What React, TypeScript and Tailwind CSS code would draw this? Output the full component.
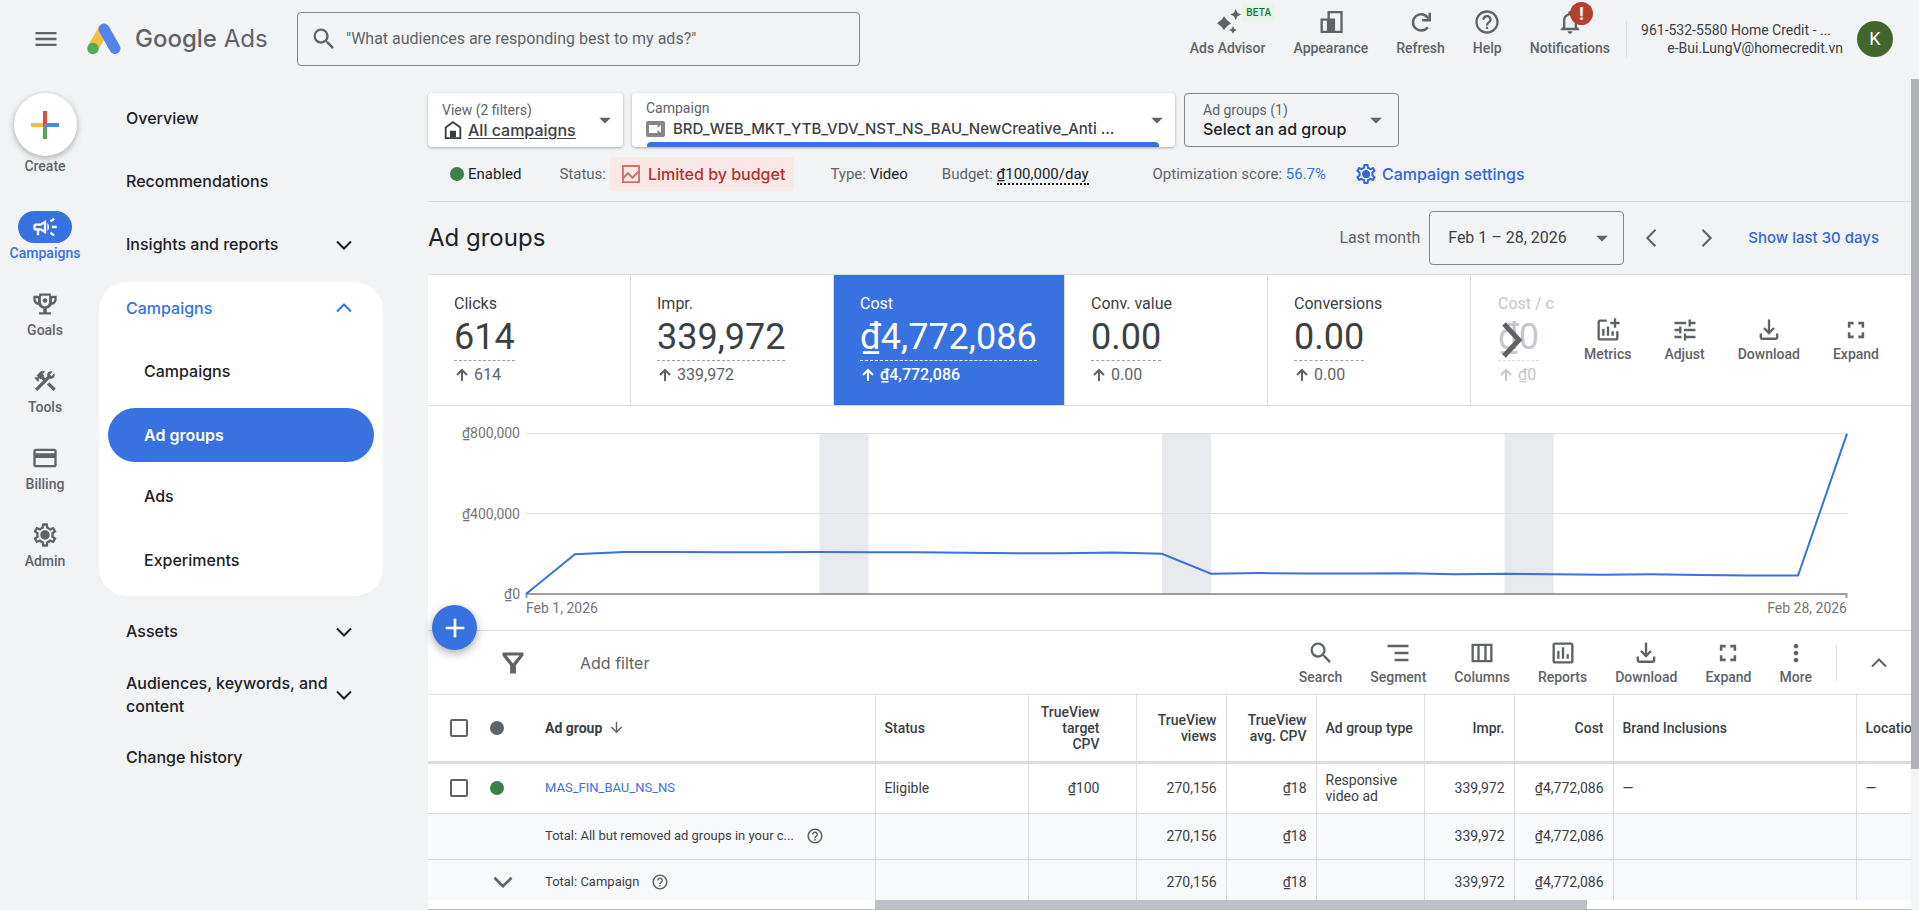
import type { ReactNode } from "react";
import {
  MdMenu,
  MdSearch,
  MdOutlineCampaign,
  MdOutlineCreditCard,
  MdOutlineSettings,
  MdHelpOutline,
  MdNotificationsNone,
  MdArrowDropDown,
  MdArrowDownward,
  MdTune,
  MdMoreVert,
  MdConstruction,
  MdOutlineAssessment,
  MdOutlineAddchart,
  MdAdd,
} from "react-icons/md";

const COST_BY_DAY = [
  0, 198000, 209000, 209000, 208000, 207000, 209000, 208000, 207000, 205000, 203000, 202000, 206000, 200000,
  101000, 104000, 102000, 102000, 103000, 98000, 101000, 98000, 96000, 98000, 95000, 92000, 92000, 797000,
];

const WEEKEND_BANDS = [6, 13, 20];

const METRICS = [
  { label: "Clicks", value: "614", change: "614", width: "w-[203px]" },
  { label: "Impr.", value: "339,972", change: "339,972", width: "w-[203px]" },
  { label: "Cost", value: "₫4,772,086", change: "₫4,772,086", width: "w-[231px]", active: true },
  { label: "Conv. value", value: "0.00", change: "0.00", width: "w-[203px]" },
  { label: "Conversions", value: "0.00", change: "0.00", width: "w-[203px]" },
];

function Svg({ size = 28, className = "", children }: { size?: number; className?: string; children: ReactNode }) {
  return (
    <svg width={size} height={size} viewBox="0 0 24 24" fill="currentColor" className={`shrink-0 ${className}`} aria-hidden="true">
      {children}
    </svg>
  );
}

const CHEVRONS = {
  up: "M6 15l6-6 6 6",
  down: "M6 9l6 6 6-6",
  left: "M15 5l-7 7 7 7",
  right: "M9 5l7 7-7 7",
};

function Chevron({ dir, size = 28 }: { dir: keyof typeof CHEVRONS; size?: number }) {
  return (
    <Svg size={size}>
      <path d={CHEVRONS[dir]} fill="none" stroke="currentColor" strokeWidth="1.800" />
    </Svg>
  );
}

function ArrowUp() {
  return (
    <Svg size={16}>
      <path d="M12 21V5M4.500 12L12 4.500l7.500 7.500" fill="none" stroke="currentColor" strokeWidth="3" />
    </Svg>
  );
}

function AdsLogo() {
  return (
    <svg width="34" height="32" viewBox="0 0 34 32" aria-hidden="true">
      <path d="M17 6 L6 25" stroke="#f1bf42" strokeWidth="11" />
      <path d="M17 6 L28 25.500" stroke="#5383ec" strokeWidth="11" strokeLinecap="round" />
      <circle cx="6" cy="25.500" r="5.700" fill="#58a55c" />
    </svg>
  );
}

function TrophyIcon() {
  return (
    <Svg>
      <path d="M19 5h-2V3H7v2H2v3c0 2.600 2 4.700 4.500 5 .8 1.500 2.300 2.600 4 2.900V19H7v2h10v-2h-3.500v-3.100c1.700-.3 3.200-1.400 4-2.900 2.500-.3 4.500-2.400 4.500-5V5h-3zM4 8V7h2v3.800C4.800 10.400 4 9.300 4 8zm8 6c-2 0-3.500-2-3.500-4V5h7v5c0 2-1.500 4-3.500 4zm8-6c0 1.300-.8 2.400-2 2.800V7h2v1z" />
      <circle cx="12" cy="9" r="2" />
    </Svg>
  );
}

function SparkIcon() {
  return (
    <Svg>
      <path d="M8.600 7c1.500 2.500 3 4 6 6-3 2-4.500 3.500-6 6-1.500-2.500-3-4-6-6 3-2 4.500-3.500 6-6z" />
      <path d="M18.600 1l1.500 3.100 3.100 1.500-3.100 1.500-1.500 3.100-1.500-3.100L14 5.600l3.100-1.500z" />
      <path d="M16.300 15.500l1.100 2.200 2.200 1.100-2.200 1.100-1.100 2.200-1.100-2.200-2.200-1.100 2.200-1.100z" />
    </Svg>
  );
}

function AppearanceIcon() {
  return (
    <Svg>
      <path fillRule="evenodd" d="M9 2.500h13v19H3V9h6zM11 4.500V9h4.500v10.500H20v-15zM5 11v8.500h3.500V11z" />
    </Svg>
  );
}

function RefreshIcon() {
  return (
    <Svg>
      <path d="M18.300 9A7 7 0 1 0 17.800 16.500" fill="none" stroke="currentColor" strokeWidth="2.100" />
      <path d="M19.500 4v6.500H13" fill="none" stroke="currentColor" strokeWidth="2.100" />
    </Svg>
  );
}

function HomeIcon() {
  return (
    <Svg size={18} className="ml-0.5">
      <path fillRule="evenodd" d="M12 0l11 8v16H1V8zM3.500 9.300V21.500h17V9.300L12 3z" />
      <path d="M8 13h8v9H8z" />
    </Svg>
  );
}

function VideoIcon() {
  return (
    <svg width="19" height="16" viewBox="0 0 19 16" aria-hidden="true" className="shrink-0">
      <rect width="19" height="16" rx="2" fill="#868686" />
      <path d="M3 4h8.500v3l3.500-3v8l-3.500-3v3H3z" fill="#fff" />
    </svg>
  );
}

function TrendIcon() {
  return (
    <Svg size={18}>
      <path fillRule="evenodd" d="M0 0h24v24H0zM2.500 2.500v19h19v-19z" />
      <path d="M2 15l6-6 6 6 8-8v3.500l-8 8-6-6-6 6z" />
    </Svg>
  );
}

function DownloadIcon() {
  return (
    <Svg>
      <path d="M11 3h2v9.200l2.600-2.600L17 11l-5 5-5-5 1.400-1.400 2.600 2.600zM4 15h2v3.500h12V15h2v3.500a2 2 0 0 1-2 2H6a2 2 0 0 1-2-2z" />
    </Svg>
  );
}

function ExpandIcon() {
  return (
    <Svg>
      <path d="M5 5h5v2.200H7.200V10H5zM14 5h5v5h-2.200V7.200H14zM5 14h2.200v2.800H10V19H5zM16.800 14H19v5h-5v-2.200h2.800z" />
    </Svg>
  );
}

function SegmentIcon() {
  return (
    <Svg>
      <path d="M3 5h18v2H3zM9 11h12v2H9zM9 17h12v2H9z" />
    </Svg>
  );
}

function ColumnsIcon() {
  return (
    <Svg>
      <path fillRule="evenodd" d="M3 4h18v16H3zM5 6v12h3V6zM10 6v12h4V6zM16 6v12h3V6z" />
    </Svg>
  );
}

function FilterIcon() {
  return (
    <Svg>
      <path fillRule="evenodd" d="M3 3h18v2.500L14.500 14v7h-5v-7L3 5.500zM6.500 5.500L12 12.500l5.500-7z" />
    </Svg>
  );
}

function TopButton({ icon, label, badge }: { icon: ReactNode; label: string; badge?: ReactNode }) {
  return (
    <button className="relative flex flex-col items-center gap-0.5 text-sm font-medium text-[#5f6368]">
      {icon}
      <span>{label}</span>
      {badge}
    </button>
  );
}

function ToolButton({ icon, label }: { icon: ReactNode; label: string }) {
  return (
    <button className="flex flex-col items-center text-sm font-medium text-[#5f6368]">
      {icon}
      <span>{label}</span>
    </button>
  );
}

function RailItem({ icon, label, active }: { icon: ReactNode; label: string; active?: boolean }) {
  return (
    <a
      href="#"
      className={`flex h-[77px] flex-col items-center text-sm font-medium ${active ? "text-[#3871e0]" : "text-[#5f6368]"}`}
    >
      <span className={`flex h-8 w-[54px] items-center justify-center rounded-full ${active ? "bg-[#3871e0] text-white" : ""}`}>
        {icon}
      </span>
      <span>{label}</span>
    </a>
  );
}

function NavItem({ label, expandable }: { label: string; expandable?: boolean }) {
  return (
    <a href="#" className="flex min-h-[63px] items-center justify-between pl-[27px] pr-[25px]">
      <span>{label}</span>
      {expandable && <Chevron dir="down" />}
    </a>
  );
}

function Header() {
  return (
    <header className="flex h-[78px] shrink-0 items-center pr-[26px]">
      <button aria-label="Main menu" className="flex w-[87px] justify-center pl-1 text-[#5f6368]">
        <MdMenu size={28} />
      </button>
      <a href="#" className="flex w-[210px] items-center gap-3.5 text-[#5f6368]">
        <AdsLogo />
        <span className="text-2xl"><span className="font-medium">Google</span> Ads</span>
      </a>
      <label className="flex h-[54px] w-[563px] items-center gap-2 rounded border border-[#80868b] px-3 text-[#5f6368]">
        <MdSearch size={28} className="shrink-0" />
        <input
          type="search"
          aria-label="Search"
          placeholder={'"What audiences are responding best to my ads?"'}
          className="w-full bg-transparent font-[Roboto] text-base outline-none placeholder:text-[#5f6368]"
        />
      </label>
      <div className="ml-auto flex items-center gap-7 pb-3 font-[Roboto]">
        <TopButton
          icon={<SparkIcon />}
          label="Ads Advisor"
          badge={<span className="absolute -right-2.5 -top-1 rounded bg-[#e6f4ea] px-1 text-[10px] leading-[18px] tracking-wide text-[#137333]">BETA</span>}
        />
        <TopButton icon={<AppearanceIcon />} label="Appearance" />
        <TopButton icon={<RefreshIcon />} label="Refresh" />
        <TopButton icon={<MdHelpOutline size={28} />} label="Help" />
        <TopButton
          icon={<MdNotificationsNone size={28} />}
          label="Notifications"
          badge={<span className="absolute -top-1.5 right-[17px] flex h-[23px] w-[23px] items-center justify-center rounded-full bg-[#b3412d] text-lg font-bold leading-none text-white">!</span>}
        />
      </div>
      <div className="ml-4 h-9 border-l border-[#dadce0]" />
      <div className="ml-3.5 text-right font-[Roboto] text-sm leading-[18px] text-[#3c4043]">
        <div className="pr-3">961-532-5580 Home Credit - ...</div>
        <div>e-Bui.LungV@homecredit.vn</div>
      </div>
      <button aria-label="Account" className="ml-3.5 h-9 w-9 rounded-full bg-[#41682a] font-[Roboto] text-lg text-white">K</button>
    </header>
  );
}

function Rail() {
  return (
    <nav aria-label="Sections" className="flex w-[90px] shrink-0 flex-col pt-3.5 font-[Roboto]">
      <button className="mb-[35px] flex flex-col items-center text-sm font-medium text-[#5f6368]">
        <span className="flex h-[63px] w-[63px] items-center justify-center rounded-full bg-white shadow-[0_2px_6px_rgba(60,64,67,0.4)]">
          <svg width="28" height="28" viewBox="0 0 28 28" aria-hidden="true">
            <path d="M0 12h12l4 4H0z" fill="#f1bf42" />
            <path d="M12 16h4v12h-4z" fill="#58a55c" />
            <path d="M28 12H16l-4 4h16z" fill="#5383ec" />
            <path d="M12 0h4v12l-4 4z" fill="#d95040" />
          </svg>
        </span>
        <span>Create</span>
      </button>
      <RailItem icon={<MdOutlineCampaign size={28} />} label="Campaigns" active />
      <RailItem icon={<TrophyIcon />} label="Goals" />
      <RailItem icon={<MdConstruction size={26} />} label="Tools" />
      <RailItem icon={<MdOutlineCreditCard size={28} />} label="Billing" />
      <RailItem
        icon={<span className="relative flex items-center justify-center"><MdOutlineSettings size={28} /><span className="absolute h-2 w-2 rounded-full bg-[#5f6368]" /></span>}
        label="Admin"
      />
    </nav>
  );
}

function SideNav() {
  return (
    <nav aria-label="Pages" className="ml-[9px] mr-[45px] w-[284px] shrink-0 pt-2 text-base font-medium leading-[23px] text-[#202124]">
      <NavItem label="Overview" />
      <NavItem label="Recommendations" />
      <NavItem label="Insights and reports" expandable />
      <div className="mb-1 mt-1.5 rounded-[28px] bg-white pb-1.5">
        <a href="#" className="flex h-[52px] items-center justify-between pl-[27px] pr-[25px] text-[#3871e0]">
          <span>Campaigns</span>
          <Chevron dir="up" />
        </a>
        <a href="#" className="flex h-[74px] items-center pl-[45px]">Campaigns</a>
        <a href="#" className="mx-[9px] flex h-[54px] items-center rounded-full bg-[#3871e0] pl-9 font-semibold text-white">Ad groups</a>
        <a href="#" className="flex h-[68px] items-center pl-[45px]">Ads</a>
        <a href="#" className="flex h-[60px] items-center pl-[45px]">Experiments</a>
      </div>
      <NavItem label="Assets" expandable />
      <NavItem label="Audiences, keywords, and content" expandable />
      <NavItem label="Change history" />
    </nav>
  );
}

function ScopeBar() {
  return (
    <div className="flex items-start gap-[9px] pt-3.5">
      <div className="flex h-[54px] w-[195px] items-center justify-between rounded bg-white pl-3.5 pr-1 shadow-[0_1px_3px_rgba(60,64,67,0.4)]">
        <div>
          <div className="font-[Roboto] text-sm leading-5 text-[#5f6368]">View (2 filters)</div>
          <a href="#" className="flex items-center gap-1.5 text-base font-medium leading-5 text-[#3c4043] underline underline-offset-2">
            <HomeIcon />
            All campaigns
          </a>
        </div>
        <button aria-label="Change view" className="text-[#5f6368]"><MdArrowDropDown size={28} /></button>
      </div>
      <div className="relative h-[54px] w-[543px] rounded bg-white pl-3.5 pt-1 shadow-[0_1px_3px_rgba(60,64,67,0.4)]">
        <label htmlFor="campaign" className="block font-[Roboto] text-sm leading-[22px] text-[#5f6368]">Campaign</label>
        <div className="flex items-center gap-2">
          <VideoIcon />
          <select id="campaign" className="w-[470px] appearance-none text-[15px] font-medium leading-5 text-[#3c4043] outline-none">
            <option>BRD_WEB_MKT_YTB_VDV_NST_NS_BAU_NewCreative_Anti ...</option>
          </select>
        </div>
        <div className="absolute bottom-0 left-[15px] right-4 h-[5px] rounded-t bg-[#3871e0]" />
        <MdArrowDropDown size={28} className="pointer-events-none absolute right-1 top-[13px] text-[#5f6368]" />
      </div>
      <div className="relative h-[54px] w-[215px] rounded border border-[#80868b] pl-[18px] pt-1.5">
        <label htmlFor="adgroup" className="block font-[Roboto] text-sm leading-5 text-[#5f6368]">Ad groups (1)</label>
        <select id="adgroup" className="block w-full appearance-none bg-transparent text-base font-medium leading-[18px] text-[#202124] outline-none">
          <option>Select an ad group</option>
        </select>
        <MdArrowDropDown size={28} className="pointer-events-none absolute right-2 top-3 text-[#5f6368]" />
      </div>
    </div>
  );
}

function StatusLine() {
  return (
    <div className="flex h-[55px] items-center border-b border-[#dadce0] pl-[22px] font-[Roboto] text-[15px] text-[#5f6368]">
      <span className="mr-1 h-3.5 w-3.5 rounded-full bg-[#3a8048]" />
      <span className="text-[#202124]">Enabled</span>
      <span className="ml-[38px]">Status:</span>
      <span className="ml-1 flex h-[34px] items-center gap-2 rounded bg-[#f9e8e6] pl-3 pr-[9px] font-[Inter] text-base font-medium text-[#b3312c]">
        <span className="text-[#c5756b]"><TrendIcon /></span>
        Limited by budget
      </span>
      <span className="ml-9">Type: <span className="text-[#202124]">Video</span></span>
      <span className="ml-[34px]">
        Budget: <a href="#" className="border-b-2 border-dotted border-[#202124] text-[#202124]">₫100,000/day</a>
      </span>
      <span className="ml-16">Optimization score: <a href="#" className="text-[#3871e0]">56.7%</a></span>
      <a href="#" className="ml-7 flex items-center gap-1 font-[Inter] text-base font-medium text-[#3367d6]">
        <span className="relative flex items-center justify-center">
          <MdOutlineSettings size={24} />
          <span className="absolute h-[7px] w-[7px] rounded-full bg-[#3367d6]" />
        </span>
        Campaign settings
      </a>
    </div>
  );
}

function TitleBar() {
  return (
    <div className="flex h-[73px] items-center border-b border-[#dadce0] pr-8">
      <h1 className="text-2xl text-[#202124]">Ad groups</h1>
      <label htmlFor="range" className="ml-auto mr-[9px] font-[Roboto] text-base text-[#5f6368]">Last month</label>
      <div className="relative">
        <select id="range" className="h-[54px] w-[195px] appearance-none rounded border border-[#80868b] bg-transparent px-[18px] font-[Roboto] text-base text-[#3c4043] outline-none">
          <option>Feb 1 – 28, 2026</option>
        </select>
        <MdArrowDropDown size={28} className="pointer-events-none absolute right-2 top-[13px] text-[#5f6368]" />
      </div>
      <button aria-label="Previous period" className="ml-3.5 text-[#5f6368]"><Chevron dir="left" /></button>
      <button aria-label="Next period" className="ml-[26px] mr-7 text-[#5f6368]"><Chevron dir="right" /></button>
      <a href="#" className="text-[15px] font-medium text-[#3367d6]">Show last 30 days</a>
    </div>
  );
}

function Scorecard() {
  return (
    <div className="flex h-[131px] border-b border-[#dadce0] font-[Roboto]">
      {METRICS.map((m) => (
        <button
          key={m.label}
          className={`flex shrink-0 flex-col items-start border-r border-[#dadce0] pl-[26px] pt-[19px] text-left ${m.width} ${m.active ? "bg-[#3871e0] text-white" : "text-[#3c4043]"}`}
        >
          <span className="text-base leading-5">{m.label}</span>
          <span className={`mb-1 border-b border-dashed text-4xl leading-[46px] ${m.active ? "border-white" : "border-[#9aa0a6]"}`}>{m.value}</span>
          <span className={`flex items-center gap-1 text-base leading-5 ${m.active ? "font-medium text-white" : "text-[#5f6368]"}`}>
            <ArrowUp />
            {m.change}
          </span>
        </button>
      ))}
      <div className="relative w-[60px] grow overflow-hidden pl-[27px] pt-[19px] text-[#c4c7cb]">
        <div className="text-base leading-5">Cost / c</div>
        <span className="mb-1 inline-block border-b border-dashed border-[#dadce0] align-top text-4xl leading-[46px]">₫0</span>
        <div className="flex items-center gap-1 text-base leading-5"><ArrowUp />₫0</div>
        <button aria-label="More metrics" className="absolute left-6 top-9 text-[#5f6368]">
          <svg width="36" height="58" viewBox="0 0 36 58" fill="none" stroke="currentColor" strokeWidth="5" aria-hidden="true">
            <path d="M9 13l15 16L9 45" />
          </svg>
        </button>
      </div>
      <div className="flex items-center gap-[33px] pr-8">
        <ToolButton icon={<MdOutlineAddchart size={28} />} label="Metrics" />
        <ToolButton icon={<MdTune size={28} />} label="Adjust" />
        <ToolButton icon={<DownloadIcon />} label="Download" />
        <ToolButton icon={<ExpandIcon />} label="Expand" />
      </div>
    </div>
  );
}

function CostChart() {
  const points = COST_BY_DAY.map((v, i) => `${(i * 1320) / 27},${161 - (v / 800000) * 161}`).join(" ");
  return (
    <div className="flex h-[224px] pl-5 pr-16 pt-[27px] font-[Roboto] text-sm leading-4 text-[#757575]">
      <div className="-mt-2 flex h-[177px] w-[72px] shrink-0 flex-col justify-between text-right">
        <span>₫800,000</span>
        <span>₫400,000</span>
        <span>₫0</span>
      </div>
      <div className="ml-1.5 min-w-0 flex-1">
        <svg width="100%" height="165" viewBox="0 0 1320 165" preserveAspectRatio="none" className="block overflow-visible" role="img" aria-label="Cost by day">
          {WEEKEND_BANDS.map((d) => (
            <rect key={d} x={(d * 1320) / 27} y="0" width="49" height="161" fill="#e8eaed" />
          ))}
          <path d="M0 0.500h1320M0 80.500h1320" stroke="#e0e0e0" />
          <path d="M0.500 165v-4h1319v4" stroke="#9e9e9e" strokeWidth="2" fill="none" />
          <polyline points={points} fill="none" stroke="#3871e0" strokeWidth="2" />
        </svg>
        <div className="mt-0.5 flex justify-between">
          <span>Feb 1, 2026</span>
          <span>Feb 28, 2026</span>
        </div>
      </div>
    </div>
  );
}

function TableToolbar() {
  return (
    <div className="relative flex h-[65px] items-center border-y border-[#dadce0] pl-[71px] pr-[18px] text-[#5f6368]">
      <button
        aria-label="New ad group"
        className="absolute -top-[26px] left-1 flex h-[45px] w-[45px] items-center justify-center rounded-full bg-[#3871e0] text-white shadow-[0_3px_8px_rgba(60,64,67,0.45)]"
      >
        <MdAdd size={32} />
      </button>
      <FilterIcon />
      <button className="ml-[53px] text-base">Add filter</button>
      <div className="ml-auto flex gap-7 font-[Roboto]">
        <ToolButton icon={<MdSearch size={28} />} label="Search" />
        <ToolButton icon={<SegmentIcon />} label="Segment" />
        <ToolButton icon={<ColumnsIcon />} label="Columns" />
        <ToolButton icon={<MdOutlineAssessment size={28} />} label="Reports" />
        <ToolButton icon={<DownloadIcon />} label="Download" />
        <ToolButton icon={<ExpandIcon />} label="Expand" />
        <ToolButton icon={<MdMoreVert size={28} />} label="More" />
      </div>
      <div className="ml-6 mr-7 h-9 border-l border-[#dadce0]" />
      <button aria-label="Collapse"><Chevron dir="up" /></button>
    </div>
  );
}

const HEAD = "border-l border-[#dadce0] px-[9px] font-medium";
const CELL = "border-l border-[#dadce0] px-[9px]";

function TotalCells() {
  return (
    <>
      <td className={CELL} />
      <td className={CELL} />
      <td className={`${CELL} text-right`}>270,156</td>
      <td className={`${CELL} text-right`}>₫18</td>
      <td className={CELL} />
      <td className={`${CELL} text-right`}>339,972</td>
      <td className={`${CELL} text-right`}>₫4,772,086</td>
      <td className={CELL} />
      <td className={CELL} />
    </>
  );
}

function Checkbox({ label }: { label: string }) {
  return <input type="checkbox" aria-label={label} className="block h-[18px] w-[18px] appearance-none rounded-xs border-2 border-[#5f6368]" />;
}

function AdGroupTable() {
  return (
    <div className="overflow-hidden">
      <table className="w-[1582px] table-fixed border-collapse font-[Roboto] text-sm leading-4 text-[#3c4043]">
        <colgroup>
          <col className="w-[53px]" />
          <col className="w-[55px]" />
          <col className="w-[339px]" />
          <col className="w-[153px]" />
          <col className="w-[108px]" />
          <col className="w-[90px]" />
          <col className="w-[90px]" />
          <col className="w-[108px]" />
          <col className="w-[90px]" />
          <col className="w-[99px]" />
          <col className="w-[243px]" />
          <col className="w-[154px]" />
        </colgroup>
        <thead>
          <tr className="h-[67px] border-b-3 border-[#dadce0] text-left">
            <th className="pl-[22px]"><Checkbox label="Select all" /></th>
            <th className="pl-[9px]"><span className="block h-3.5 w-3.5 rounded-full bg-[#5f6368]" /></th>
            <th className="pl-[9px] font-bold">
              <span className="flex items-center gap-1.5">Ad group <MdArrowDownward size={17} className="text-[#5f6368]" /></span>
            </th>
            <th className={HEAD}>Status</th>
            <th className={`${HEAD} pr-9 text-right`}>TrueView target CPV</th>
            <th className={`${HEAD} text-right`}>TrueView views</th>
            <th className={`${HEAD} text-right`}>TrueView avg. CPV</th>
            <th className={`${HEAD} whitespace-nowrap`}>Ad group type</th>
            <th className={`${HEAD} text-right`}>Impr.</th>
            <th className={`${HEAD} text-right`}>Cost</th>
            <th className={HEAD}>Brand Inclusions</th>
            <th className={HEAD}>Locations</th>
          </tr>
        </thead>
        <tbody>
          <tr className="h-[51px] border-b border-[#dadce0]">
            <td className="pl-[22px]"><Checkbox label="Select MAS_FIN_BAU_NS_NS" /></td>
            <td className="pl-[9px]"><span className="block h-3.5 w-3.5 rounded-full bg-[#3a8048]" /></td>
            <td className="pl-[9px] text-[13px]"><a href="#" className="text-[#3871e0]">MAS_FIN_BAU_NS_NS</a></td>
            <td className={CELL}>Eligible</td>
            <td className={`${CELL} pr-9 text-right`}>₫100</td>
            <td className={`${CELL} text-right`}>270,156</td>
            <td className={`${CELL} text-right`}>₫18</td>
            <td className={CELL}>Responsive video ad</td>
            <td className={`${CELL} text-right`}>339,972</td>
            <td className={`${CELL} text-right`}>₫4,772,086</td>
            <td className={CELL}>—</td>
            <td className={CELL}>—</td>
          </tr>
          <tr className="h-[46px] border-b border-[#dadce0] bg-[#f8f9fb]">
            <td />
            <td />
            <td className="pl-[9px] text-[13px]">
              <span className="flex items-center gap-3">
                Total: All but removed ad groups in your c...
                <MdHelpOutline size={18} className="text-[#5f6368]" />
              </span>
            </td>
            <TotalCells />
          </tr>
          <tr className="h-[46px] bg-[#f8f9fb]">
            <td />
            <td className="pl-[5px]"><button aria-label="Expand totals" className="block text-[#5f6368]"><Chevron dir="down" size={34} /></button></td>
            <td className="pl-[9px] text-[13px]">
              <span className="flex items-center gap-3">
                Total: Campaign
                <MdHelpOutline size={18} className="text-[#5f6368]" />
              </span>
            </td>
            <TotalCells />
          </tr>
        </tbody>
      </table>
    </div>
  );
}

export default function App() {
  return (
    <div className="flex h-screen flex-col overflow-hidden bg-[#f1f3f5] font-[Inter]">
      <Header />
      <div className="flex min-h-0 flex-1 pt-px">
        <Rail />
        <SideNav />
        <main className="flex min-h-0 min-w-0 flex-1 flex-col">
          <ScopeBar />
          <StatusLine />
          <TitleBar />
          <section className="flex min-h-0 flex-1 flex-col bg-white">
            <Scorecard />
            <CostChart />
            <TableToolbar />
            <div className="min-h-0 flex-1 overflow-hidden">
              <AdGroupTable />
            </div>
            {/* horizontal scroll track under the unfrozen columns */}
            <div className="h-2.5 shrink-0 border-b border-[#b9bdb2] bg-white pl-[447px]">
              <div className="h-full w-[712px] bg-[#bdc1c6]" />
            </div>
          </section>
        </main>
        <div className="w-2 shrink-0">
          <div className="h-[83%] bg-[#b1b3b6]" />
        </div>
      </div>
    </div>
  );
}
